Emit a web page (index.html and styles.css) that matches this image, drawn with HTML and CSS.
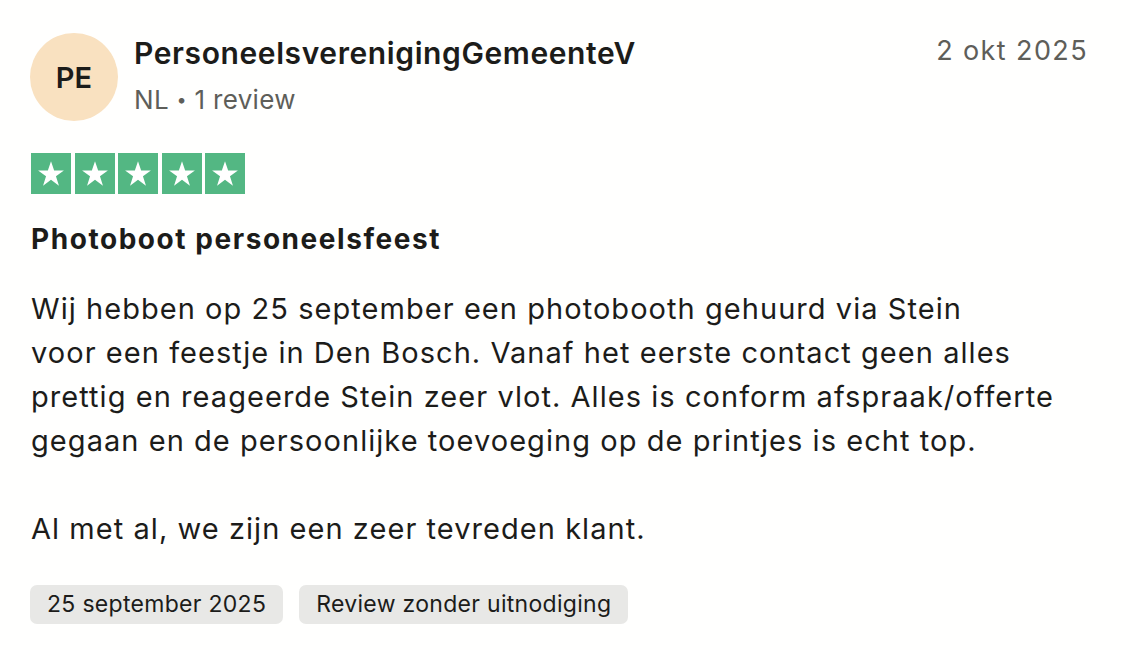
FILE: index.html
```html
<!DOCTYPE html>
<html lang="nl">
<head>
<meta charset="utf-8">
<link rel="stylesheet" href="styles.css">
</head>
<body>
<article class="review">
  <header class="head">
    <div class="avatar">PE</div>
    <div class="who">
      <div class="name">PersoneelsverenigingGemeenteV</div>
      <div class="meta">NL <span class="dot">•</span> 1 review</div>
    </div>
    <time class="date">2 okt 2025</time>
  </header>
  <div class="stars">
    <span class="star"><svg viewBox="0 0 24 24"><path d="M12 3.5l2.1 6.2h6.5l-5.3 3.8 2 6.3L12 15.9l-5.3 3.9 2-6.3-5.3-3.8h6.5z" fill="#fff"/></svg></span>
    <span class="star"><svg viewBox="0 0 24 24"><path d="M12 3.5l2.1 6.2h6.5l-5.3 3.8 2 6.3L12 15.9l-5.3 3.9 2-6.3-5.3-3.8h6.5z" fill="#fff"/></svg></span>
    <span class="star"><svg viewBox="0 0 24 24"><path d="M12 3.5l2.1 6.2h6.5l-5.3 3.8 2 6.3L12 15.9l-5.3 3.9 2-6.3-5.3-3.8h6.5z" fill="#fff"/></svg></span>
    <span class="star"><svg viewBox="0 0 24 24"><path d="M12 3.5l2.1 6.2h6.5l-5.3 3.8 2 6.3L12 15.9l-5.3 3.9 2-6.3-5.3-3.8h6.5z" fill="#fff"/></svg></span>
    <span class="star"><svg viewBox="0 0 24 24"><path d="M12 3.5l2.1 6.2h6.5l-5.3 3.8 2 6.3L12 15.9l-5.3 3.9 2-6.3-5.3-3.8h6.5z" fill="#fff"/></svg></span>
  </div>
  <h2 class="title">Photoboot personeelsfeest</h2>
  <p class="body">Wij hebben op 25 september een photobooth gehuurd via Stein<br>voor een feestje in Den Bosch. Vanaf het eerste contact geen alles<br>prettig en reageerde Stein zeer vlot. Alles is conform afspraak/offerte<br>gegaan en de persoonlijke toevoeging op de printjes is echt top.<br><br>Al met al, we zijn een zeer tevreden klant.</p>
  <div class="tags">
    <span class="tag">25 september 2025</span>
    <span class="tag">Review zonder uitnodiging</span>
  </div>
</article>
</body>
</html>
```
FILE: styles.css
```css
html, body {
  margin: 0;
  background: #fffffe;
}
body {
  font-family: Inter, "Noto Sans", sans-serif;
  color: #1c1c1a;
}
.review {
  padding: 33px 42px 0 30px;
}
.head {
  display: flex;
  align-items: flex-start;
}
.avatar {
  width: 88px;
  height: 88px;
  border-radius: 50%;
  background: #f9e1c0;
  display: flex;
  align-items: center;
  justify-content: center;
  font-size: 29px;
  font-weight: 600;
  color: #1c1c1a;
  flex-shrink: 0;
}
.who {
  margin-left: 16px;
  flex: 1;
}
.name {
  font-size: 30px;
  font-weight: 600;
  line-height: 40px;
  letter-spacing: 0.6px;
}
.meta {
  font-size: 26px;
  line-height: 34px;
  letter-spacing: 0.3px;
  margin-top: 10px;
  color: #5e5e59;
}
.dot {
  font-size: 18px;
  vertical-align: 3px;
}
.date {
  font-size: 27px;
  line-height: 36px;
  letter-spacing: 1.4px;
  color: #5e5e59;
}
.stars {
  display: flex;
  gap: 3.5px;
  margin-top: 32px;
  margin-left: 1px;
}
.star {
  width: 40px;
  height: 41px;
  background: #53b783;
  display: flex;
  align-items: center;
  justify-content: center;
}
.star svg {
  width: 36px;
  height: 36px;
}
.title {
  font-size: 28px;
  font-weight: 700;
  letter-spacing: 1.55px;
  margin: 25px 0 0 1px;
  line-height: 40px;
}
.body {
  font-size: 29px;
  line-height: 44px;
  letter-spacing: 1.05px;
  margin: 28px 0 0 1px;
}
.tags {
  display: flex;
  gap: 16px;
  margin-top: 34px;
}
.tag {
  background: #e8e8e6;
  border-radius: 7px;
  font-size: 23px;
  letter-spacing: 0.3px;
  line-height: 39px;
  padding: 0 17px;
}
```
